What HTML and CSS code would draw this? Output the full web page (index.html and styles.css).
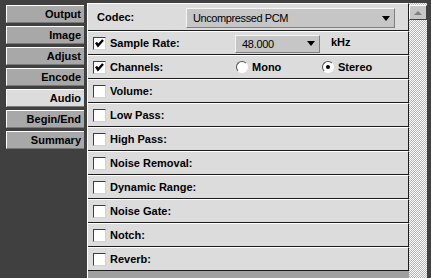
FILE: index.html
```html
<!DOCTYPE html>
<html>
<head>
<meta charset="utf-8">
<link rel="stylesheet" href="styles.css">
</head>
<body>
<div class="app">
  <nav class="tabs">
    <div class="tab">Output</div>
    <div class="tab">Image</div>
    <div class="tab">Adjust</div>
    <div class="tab">Encode</div>
    <div class="tab active">Audio</div>
    <div class="tab">Begin/End</div>
    <div class="tab">Summary</div>
  </nav>
  <main class="panel">
    <div class="row row-codec">
      <span class="label codec-label">Codec:</span>
      <div class="select codec-select"><span class="select-text">Uncompressed PCM</span><span class="arrow"></span></div>
    </div>
    <div class="row">
      <span class="cb"><svg width="11" height="11" viewBox="0 0 11 11"><path d="M2 4.5 L4 7.5 L9 2" fill="none" stroke="#000" stroke-width="2.4"/></svg></span>
      <span class="label wide">Sample Rate:</span>
      <div class="select rate-select"><span class="select-text">48.000</span><span class="arrow"></span></div>
      <span class="label unit">kHz</span>
    </div>
    <div class="row">
      <span class="cb"><svg width="11" height="11" viewBox="0 0 11 11"><path d="M2 4.5 L4 7.5 L9 2" fill="none" stroke="#000" stroke-width="2.4"/></svg></span>
      <span class="label wide">Channels:</span>
      <span class="radio radio-mono"></span>
      <span class="label mono">Mono</span>
      <span class="radio checked"></span>
      <span class="label stereo">Stereo</span>
    </div>
    <div class="row"><span class="cb"></span><span class="label">Volume:</span></div>
    <div class="row"><span class="cb"></span><span class="label">Low Pass:</span></div>
    <div class="row"><span class="cb"></span><span class="label">High Pass:</span></div>
    <div class="row"><span class="cb"></span><span class="label">Noise Removal:</span></div>
    <div class="row"><span class="cb"></span><span class="label">Dynamic Range:</span></div>
    <div class="row"><span class="cb"></span><span class="label">Noise Gate:</span></div>
    <div class="row"><span class="cb"></span><span class="label">Notch:</span></div>
    <div class="row"><span class="cb"></span><span class="label">Reverb:</span></div>
  </main>
  <div class="scroll">
    <div class="up"><span class="up-arrow"></span></div>
  </div>
</div>
</body>
</html>
```
FILE: styles.css
```css
* { box-sizing: border-box; }
html, body { margin: 0; padding: 0; }
body {
  background: #404040;
  font-family: "Liberation Sans", Arial, sans-serif;
  font-size: 11px;
  font-weight: bold;
  color: #000;
  width: 431px;
  height: 278px;
  overflow: hidden;
}
.app {
  display: flex;
  height: 278px;
}
.tabs {
  width: 87px;
  flex: none;
  padding: 5px 0 0 6px;
  display: flex;
  flex-direction: column;
  gap: 3px;
}
.tab {
  width: 78px;
  height: 18px;
  background: #a8a8a8;
  border-top: 1px solid #ffffff;
  border-left: 1px solid #ffffff;
  border-bottom: 1px solid #787878;
  text-align: right;
  padding: 1px 3px 0 0;
  line-height: 15px;
}
.tab.active {
  background: #dcdcdc;
}
.panel {
  width: 322px;
  flex: none;
  margin-top: 3px;
  height: 275px;
  background: #a0a0a0;
  border-left: 1px solid #ffffff;
  display: flex;
  flex-direction: column;
}
.row {
  height: 24px;
  flex: none;
  background: #dcdcdc;
  border-top: 1px solid #ffffff;
  border-bottom: 1px solid #1c1c1c;
  border-right: 1px solid #1c1c1c;
  display: flex;
  align-items: center;
  padding-left: 5px;
}
.row-codec {
  height: 28px;
  padding-left: 9px;
  align-items: flex-start;
  padding-top: 4px;
}
.label { white-space: nowrap; }
.codec-label { width: 89px; padding-top: 3px; }
.wide { width: 125px; }
.cb {
  width: 13px;
  height: 13px;
  flex: none;
  background: #ffffff;
  border: 1px solid;
  border-color: #404040 #d8d0c0 #d8d0c0 #404040;
  margin-right: 4px;
  margin-top: 1px;
  display: flex;
}
.select {
  display: flex;
  align-items: center;
  background: #c6c6c6;
  border: 1px solid;
  border-color: #f4f4f4 #808080 #808080 #f4f4f4;
  font-weight: normal;
  padding-left: 6px;
  padding-right: 4px;
}
.select-text { letter-spacing: -0.4px; }
.codec-select { width: 209px; height: 20px; }
.rate-select { width: 85px; height: 18px; margin-top: 1px; }
.rate-select .select-text { letter-spacing: -0.3px; }
.arrow {
  margin-left: auto;
  width: 0;
  height: 0;
  border-left: 4px solid transparent;
  border-right: 4px solid transparent;
  border-top: 5px solid #000;
}
.unit { margin-left: 11px; margin-top: -3px; }
.radio {
  width: 12px;
  height: 12px;
  flex: none;
  border-radius: 50%;
  background: #ffffff;
  border: 1px solid;
  border-color: #505050 #ffffff #ffffff #505050;
  display: flex;
  align-items: center;
  justify-content: center;
  margin-right: 4px;
}
.radio-mono { margin-left: 1px; }
.radio.checked::after {
  content: "";
  width: 4px;
  height: 4px;
  border-radius: 50%;
  background: #000;
}
.mono { width: 70px; }
.scroll {
  width: 18px;
  flex: none;
  margin-top: 3px;
  height: 275px;
  background: repeating-conic-gradient(#b4b4b4 0 25%, #ffffff 0 50%) 0 0 / 2px 2px;
  padding-top: 2px;
}
.up {
  width: 18px;
  height: 15px;
  background: #c6c6c6;
  border: 1px solid;
  border-color: #ffffff #404040 #404040 #ffffff;
  display: flex;
  align-items: center;
  justify-content: center;
}
.up-arrow {
  width: 0;
  height: 0;
  border-left: 4px solid transparent;
  border-right: 4px solid transparent;
  border-bottom: 4px solid #808080;
}
```
